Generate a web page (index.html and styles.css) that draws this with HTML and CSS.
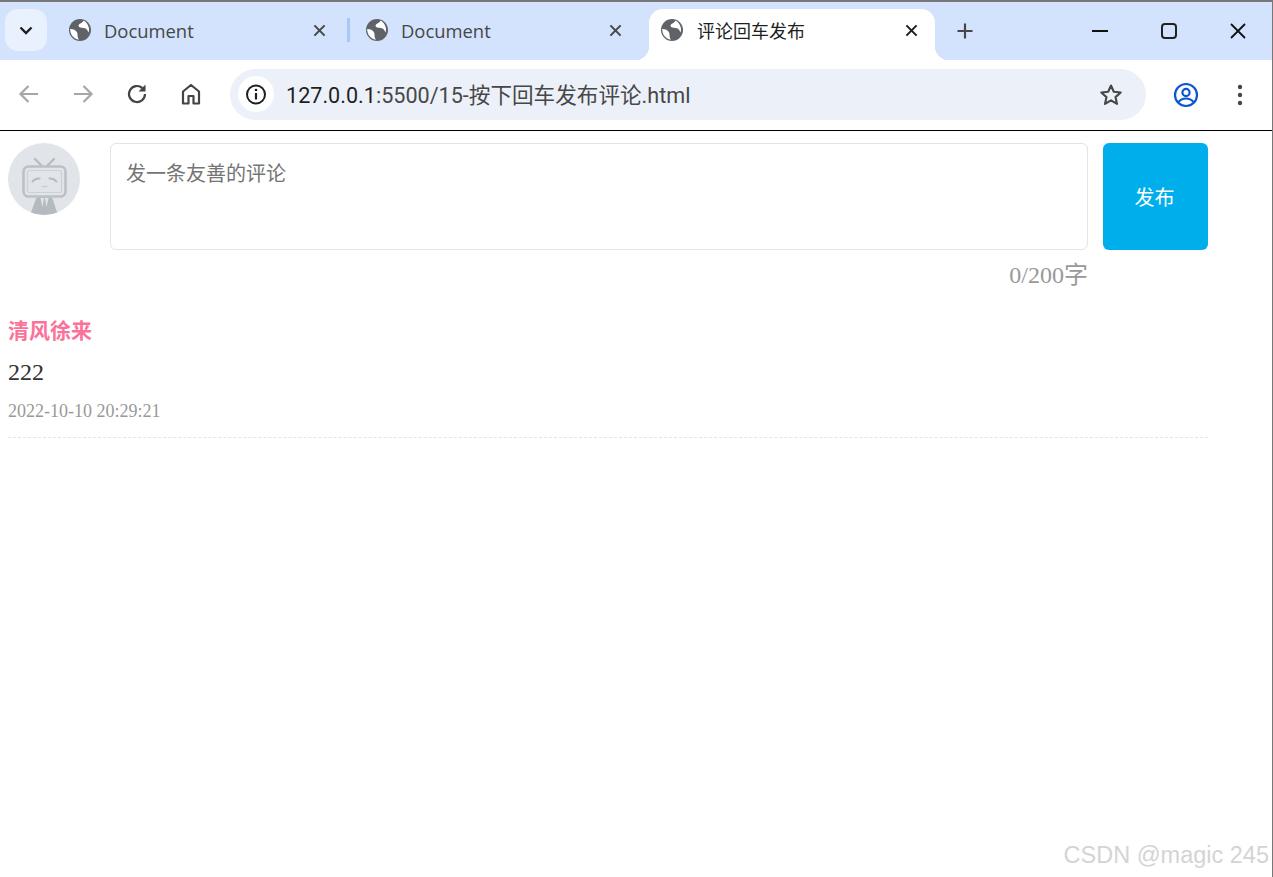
FILE: index.html
```html
<!DOCTYPE html>
<html lang="zh-CN">
<head>
  <meta charset="UTF-8" />
  <title>评论回车发布</title>
  <link rel="stylesheet" href="styles.css">
</head>
<body>
  <svg class="defs" width="0" height="0">
    <symbol id="globe" viewBox="0 0 22 22">
      <circle cx="11" cy="11" r="11" fill="currentColor"/>
      <path d="M14.500 1.500C14 3.500 11.500 4 10.200 5.200 9 6.400 9.500 8 11.300 8.500c2.300.6 4.500.3 6 1.500 1 .8 1.500 2.300 2.300 3.500.4-1.400.6-3 .2-4.700-.6-3.200-2.600-5.800-5.300-7.300z" fill="#fff"/>
      <path d="M1.200 10c2.300-.2 4.400.7 6 2.300 1.500 1.500 1.300 3 1.400 4.700.1 1.300.5 2.500 1.300 3.700-2.500-.3-5-1.700-6.700-4-1.300-1.900-2.100-4.300-2-6.700z" fill="#fff"/>
    </symbol>
    <symbol id="x" viewBox="0 0 14 14">
      <path d="M1.500 1.500l11 11M12.500 1.500l-11 11" fill="none" stroke="currentColor" stroke-width="2.200"/>
    </symbol>
    <clipPath id="avatar-clip"><circle cx="36" cy="36" r="36"/></clipPath>
  </svg>

  <div class="tabstrip">
    <div class="tab-search">
      <svg width="14" height="9" viewBox="0 0 14 9"><path d="M1.500 1.500L7 7l5.500-5.500" fill="none" stroke="#1f1f1f" stroke-width="2.400"/></svg>
    </div>
    <div class="tab tab-first">
      <svg class="favicon"><use href="#globe"/></svg>
      <span class="tab-title">Document</span>
      <svg class="tab-close"><use href="#x"/></svg>
    </div>
    <div class="tab-sep"></div>
    <div class="tab tab-second">
      <svg class="favicon"><use href="#globe"/></svg>
      <span class="tab-title">Document</span>
      <svg class="tab-close"><use href="#x"/></svg>
    </div>
    <div class="tab tab-active">
      <svg class="favicon"><use href="#globe"/></svg>
      <span class="tab-title">评论回车发布</span>
      <svg class="tab-close"><use href="#x"/></svg>
    </div>
    <svg class="new-tab" width="18" height="18" viewBox="0 0 18 18"><path d="M9 1.500v15M1.500 9h15" fill="none" stroke="#474747" stroke-width="2.200"/></svg>
    <div class="win-controls">
      <svg width="16" height="16" viewBox="0 0 16 16"><path d="M0 8h16" stroke="#111" stroke-width="2"/></svg>
      <svg width="16" height="16" viewBox="0 0 16 16"><rect x="1" y="1" width="14" height="14" rx="3" fill="none" stroke="#222" stroke-width="2"/></svg>
      <svg width="16" height="16" viewBox="0 0 16 16"><path d="M1 1l14 14M15 1L1 15" stroke="#111" stroke-width="1.800" fill="none"/></svg>
    </div>
  </div>

  <div class="toolbar">
    <svg class="tool-icon" width="24" height="24" viewBox="0 0 24 24"><path d="M21 12H4M11.500 4L3.500 12l8 8" fill="none" stroke="#a6a6a6" stroke-width="2.200"/></svg>
    <svg class="tool-icon" width="24" height="24" viewBox="0 0 24 24"><path d="M3 12h17M12.500 4l8 8-8 8" fill="none" stroke="#a6a6a6" stroke-width="2.200"/></svg>
    <svg class="tool-icon" width="24" height="24" viewBox="0 0 24 24"><path d="M20 12a8 8 0 1 1-2.600-5.900" fill="none" stroke="#444" stroke-width="2.200"/><path d="M20.500 2.500v7h-7z" fill="#444"/></svg>
    <svg class="tool-icon" width="24" height="24" viewBox="0 0 24 24"><path d="M4 21.500V9.500L12 3l8 6.500v12h-5.500v-7.500h-5v7.500z" fill="none" stroke="#444" stroke-width="2.200" stroke-linejoin="round"/></svg>
    <div class="omnibox">
      <div class="site-info">
        <svg width="22" height="22" viewBox="0 0 22 22"><circle cx="11" cy="11.500" r="9" fill="none" stroke="#1f1f1f" stroke-width="2"/><path d="M11 10V16.500" stroke="#1f1f1f" stroke-width="2.200"/><circle cx="11" cy="7" r="1.300" fill="#1f1f1f"/></svg>
      </div>
      <span class="url"><span class="url-host">127.0.0.1</span>:5500/15-按下回车发布评论.html</span>
      <svg class="star" width="24" height="24" viewBox="0 0 24 24"><path d="M12 2.500l2.800 6.300 6.900.7-5.200 4.600 1.500 6.800-6-3.500-6 3.500 1.500-6.800-5.200-4.600 6.900-.7z" fill="none" stroke="#474747" stroke-width="2.100" stroke-linejoin="round"/></svg>
    </div>
    <svg class="profile" width="26" height="26" viewBox="0 0 26 26"><circle cx="13" cy="13" r="11" fill="none" stroke="#0b57d0" stroke-width="2.200"/><circle cx="13" cy="10.500" r="3.600" fill="none" stroke="#0b57d0" stroke-width="2.200"/><path d="M5.500 20c2-2.500 4.500-3.500 7.500-3.500s5.500 1 7.500 3.500" fill="none" stroke="#0b57d0" stroke-width="2.200"/></svg>
    <svg class="menu" width="6" height="22" viewBox="0 0 6 22"><circle cx="3" cy="3" r="2.200" fill="#474747"/><circle cx="3" cy="11" r="2.200" fill="#474747"/><circle cx="3" cy="19" r="2.200" fill="#474747"/></svg>
  </div>

  <div class="page">
    <div class="comment-box">
      <svg class="avatar" width="72" height="72" viewBox="0 0 72 72">
        <circle cx="36" cy="36" r="36" fill="#e1e5ea"/>
        <path d="M27 16l7 7M46 16l-7 7" stroke="#b6bcc2" stroke-width="2.400" stroke-linecap="round"/>
        <rect x="15.500" y="23.500" width="42" height="30" rx="5" fill="#e1e5ea" stroke="#bcc1c7" stroke-width="2.600"/>
        <rect x="19.500" y="27.500" width="34" height="22" rx="2" fill="none" stroke="#cdd1d6" stroke-width="1.200"/>
        <path d="M24.500 38.500q3-3.500 7-3M48.500 38.500q-3-3.500-7-3" fill="none" stroke="#b6bcc2" stroke-width="2" stroke-linecap="round"/>
        <path d="M33.500 43q1.500 2 3 0q1.500 2 3 0" fill="none" stroke="#c0c5ca" stroke-width="1"/>
        <g clip-path="url(#avatar-clip)">
          <path d="M30 54.500h13l1.500 1 5.500 17H22l6-17z" fill="#b3bac0"/>
          <path d="M32.500 55l2 9 1.500-9M37 55l1.500 9 2-9" fill="#e1e5ea"/>
        </g>
      </svg>
      <textarea class="comment-input" placeholder="发一条友善的评论"></textarea>
      <button class="publish-btn">发布</button>
    </div>
    <div class="word-count">0/200字</div>

    <div class="comment-item">
      <div class="user-name">清风徐来</div>
      <div class="comment-text">222</div>
      <div class="comment-time">2022-10-10 20:29:21</div>
    </div>
  </div>

  <div class="watermark">CSDN @magic 245</div>
</body>
</html>
```

FILE: styles.css
```css
* {
  box-sizing: border-box;
}
html, body {
  height: 877px;
  overflow: hidden;
}
body {
  margin: 0;
  background: #fff;
  border-top: 2px solid #777;
  border-right: 1px solid #777;
  position: relative;
  font-family: "Liberation Serif", "Noto Sans CJK SC", serif;
}
.defs {
  position: absolute;
}

/* tab strip */
.tabstrip {
  display: flex;
  align-items: flex-start;
  height: 58px;
  padding: 7px 0 0 5px;
  background: #d3e3fd;
  font-family: "Open Sans", "Noto Sans CJK SC", sans-serif;
  font-size: 18.4px;
}
.tab-search {
  display: flex;
  align-items: center;
  justify-content: center;
  width: 42px;
  height: 42px;
  border-radius: 13px;
  background: #e9f0fe;
}
.tab {
  display: flex;
  align-items: center;
  height: 51px;
  padding-bottom: 9px;
  color: #444746;
}
.favicon {
  width: 22px;
  height: 22px;
  flex-shrink: 0;
  color: #5f6368;
}
.tab-title {
  flex: 1;
  margin-left: 13px;
}
.tab-close {
  width: 13px;
  height: 13px;
  color: #444746;
}
.tab-first {
  width: 300px;
  padding-left: 22px;
  padding-right: 21px;
}
.tab-sep {
  width: 3px;
  height: 24px;
  margin-top: 9px;
  background: #a8c7fa;
}
.tab-second {
  width: 299px;
  padding-left: 16px;
  padding-right: 27px;
}
.tab-active {
  position: relative;
  width: 286px;
  padding-left: 12px;
  padding-right: 17px;
  background: #fff;
  border-radius: 14px 14px 0 0;
  color: #1f1f1f;
  font-size: 18px;
}
.tab-active .tab-title {
  margin-left: 14px;
}
.tab-active .tab-close {
  color: #1f1f1f;
}
.tab-active::before,
.tab-active::after {
  content: "";
  position: absolute;
  bottom: 0;
  width: 14px;
  height: 14px;
}
.tab-active::before {
  left: -14px;
  background: radial-gradient(circle at 0 0, #d3e3fd 14px, #fff 14.5px);
}
.tab-active::after {
  right: -14px;
  background: radial-gradient(circle at 100% 0, #d3e3fd 14px, #fff 14.5px);
}
.new-tab {
  margin: 13px 0 0 21px;
}
.win-controls {
  display: flex;
  gap: 53px;
  margin: 14px 0 0 auto;
  padding-right: 26px;
}

/* toolbar */
.toolbar {
  display: flex;
  align-items: center;
  height: 71px;
  padding: 0 0 2px 17px;
  border-bottom: 1px solid #000;
  border-radius: 14px 14px 0 0;
  background: #fff;
  font-family: Roboto, "Noto Sans CJK SC", sans-serif;
}
.tool-icon {
  margin-right: 30px;
}
.omnibox {
  display: flex;
  align-items: center;
  width: 916px;
  height: 51px;
  margin-left: -3px;
  padding: 0 23px 0 8px;
  border-radius: 26px;
  background: #ebf0f9;
}
.site-info {
  display: flex;
  align-items: center;
  justify-content: center;
  width: 36px;
  height: 36px;
  border-radius: 50%;
  background: #fff;
}
.url {
  flex: 1;
  margin: 0 0 2px 12px;
  font-size: 21.6px;
  color: #474747;
}
.url-host {
  color: #1f1f1f;
}
.star {
  margin-top: 2px;
}
.profile {
  margin: 2px 0 0 27px;
}
.menu {
  margin: 2px 0 0 38px;
}

/* page */
.page {
  width: 1200px;
  margin: 12px 0 0 8px;
}
.comment-box {
  display: flex;
  align-items: flex-start;
}
.avatar {
  flex-shrink: 0;
  margin-right: 30px;
}
.comment-input {
  width: 978px;
  height: 107px;
  padding: 15px;
  border: 1px solid #e1e5e9;
  border-radius: 6px;
  outline: none;
  resize: none;
  font-family: "Noto Sans CJK SC", sans-serif;
  font-size: 20px;
  line-height: 28px;
}
.comment-input::placeholder {
  color: #757575;
  opacity: 1;
}
.publish-btn {
  width: 105px;
  height: 107px;
  margin-left: 15px;
  padding: 0 2px 0 0;
  border: none;
  border-radius: 6px;
  background: #00aeec;
  color: #fff;
  font-family: "Noto Sans CJK SC", sans-serif;
  font-size: 20px;
  cursor: pointer;
}
.word-count {
  width: 1080px;
  margin-top: 11px;
  text-align: right;
  font-size: 24px;
  line-height: 28px;
  color: #999;
}
.comment-item {
  margin-top: 25px;
  padding-bottom: 14px;
  border-bottom: 1px dashed #e3e5e7;
}
.user-name {
  font-family: "Noto Sans CJK SC", sans-serif;
  font-size: 21px;
  font-weight: 700;
  line-height: 30px;
  color: #fb7299;
}
.comment-text {
  margin-top: 12px;
  font-size: 24px;
  line-height: 32px;
  color: #333;
}
.comment-time {
  margin-top: 11px;
  font-size: 18px;
  line-height: 24px;
  color: #999;
}
.watermark {
  position: absolute;
  right: 3px;
  bottom: 8px;
  font-family: "Liberation Sans", sans-serif;
  font-size: 23.5px;
  color: #d4d4d4;
  white-space: nowrap;
}
```
